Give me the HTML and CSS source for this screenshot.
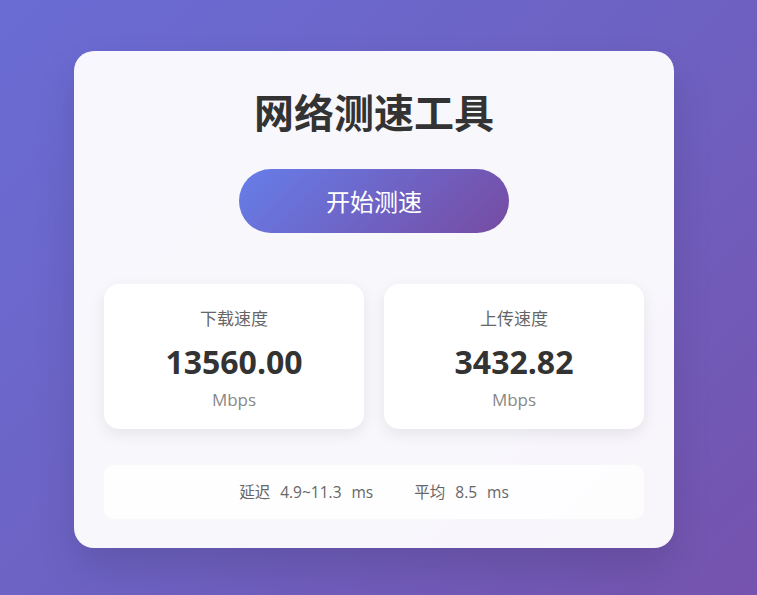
FILE: index.html
```html
<!DOCTYPE html>
<html lang="zh">
<head>
<meta charset="utf-8">
<title>网络测速工具</title>
<link rel="stylesheet" href="styles.css">
</head>
<body>
<main class="panel">
  <h1 class="title">网络测速工具</h1>
  <div class="actions">
    <button class="start-btn" type="button">开始测速</button>
  </div>
  <section class="results">
    <div class="result-card">
      <div class="result-label">下载速度</div>
      <div class="result-value">13560.00</div>
      <div class="result-unit">Mbps</div>
    </div>
    <div class="result-card">
      <div class="result-label">上传速度</div>
      <div class="result-value">3432.82</div>
      <div class="result-unit">Mbps</div>
    </div>
  </section>
  <div class="latency">
    <span class="latency-group"><span class="latency-key">延迟</span><span class="latency-val">4.9~11.3</span><span class="latency-unit">ms</span></span>
    <span class="latency-group"><span class="latency-key">平均</span><span class="latency-val">8.5</span><span class="latency-unit">ms</span></span>
  </div>
</main>
</body>
</html>
```

FILE: styles.css
```css
* { box-sizing: border-box; }

html, body {
  margin: 0;
  padding: 0;
}

body {
  width: 757px;
  height: 595px;
  overflow: hidden;
  background: linear-gradient(135deg, #6a6cd4 0%, #6d62c3 50%, #7553ae 100%);
  font-family: "Open Sans", "Noto Sans CJK SC", sans-serif;
  color: #333;
  padding-top: 51px;
  padding-left: 74px;
}

.panel {
  width: 600px;
  background: rgba(255, 255, 255, 0.95);
  border-radius: 20px;
  box-shadow: 0 20px 40px rgba(0, 0, 0, 0.12);
  padding: 36px 30px 29px;
}

.title {
  margin: 0 0 34px;
  text-align: center;
  font-family: "Noto Sans CJK SC", sans-serif;
  font-size: 40px;
  line-height: 48px;
  font-weight: 700;
  color: #333;
}

.actions {
  display: flex;
  justify-content: center;
}

.start-btn {
  width: 270px;
  height: 64px;
  border: none;
  border-radius: 32px;
  background: linear-gradient(135deg, #667eea 0%, #764ba2 100%);
  color: #fff;
  font-family: "Noto Sans CJK SC", sans-serif;
  font-size: 24px;
  line-height: 64px;
  padding: 0;
  cursor: pointer;
}

.results {
  margin-top: 51px;
  display: grid;
  grid-template-columns: 1fr 1fr;
  gap: 20px;
}

.result-card {
  background: #fff;
  border-radius: 15px;
  box-shadow: 0 5px 15px rgba(0, 0, 0, 0.08);
  padding: 22px 10px 17px;
  text-align: center;
}

.result-label {
  font-family: "Noto Sans CJK SC", sans-serif;
  font-size: 17px;
  line-height: 24px;
  color: #666;
}

.result-value {
  margin-top: 10px;
  font-family: "Open Sans", sans-serif;
  font-size: 32px;
  line-height: 44px;
  font-weight: 700;
  color: #333;
}

.result-unit {
  margin-top: 4px;
  font-size: 17px;
  line-height: 24px;
  color: #888;
}

.latency {
  margin-top: 36px;
  background: rgba(255, 255, 255, 0.8);
  border-radius: 10px;
  padding: 15px 10px;
  display: flex;
  justify-content: center;
  gap: 41px;
  font-size: 15.5px;
  line-height: 24px;
  color: #666;
}

.latency-group {
  display: flex;
  gap: 10px;
}
```
